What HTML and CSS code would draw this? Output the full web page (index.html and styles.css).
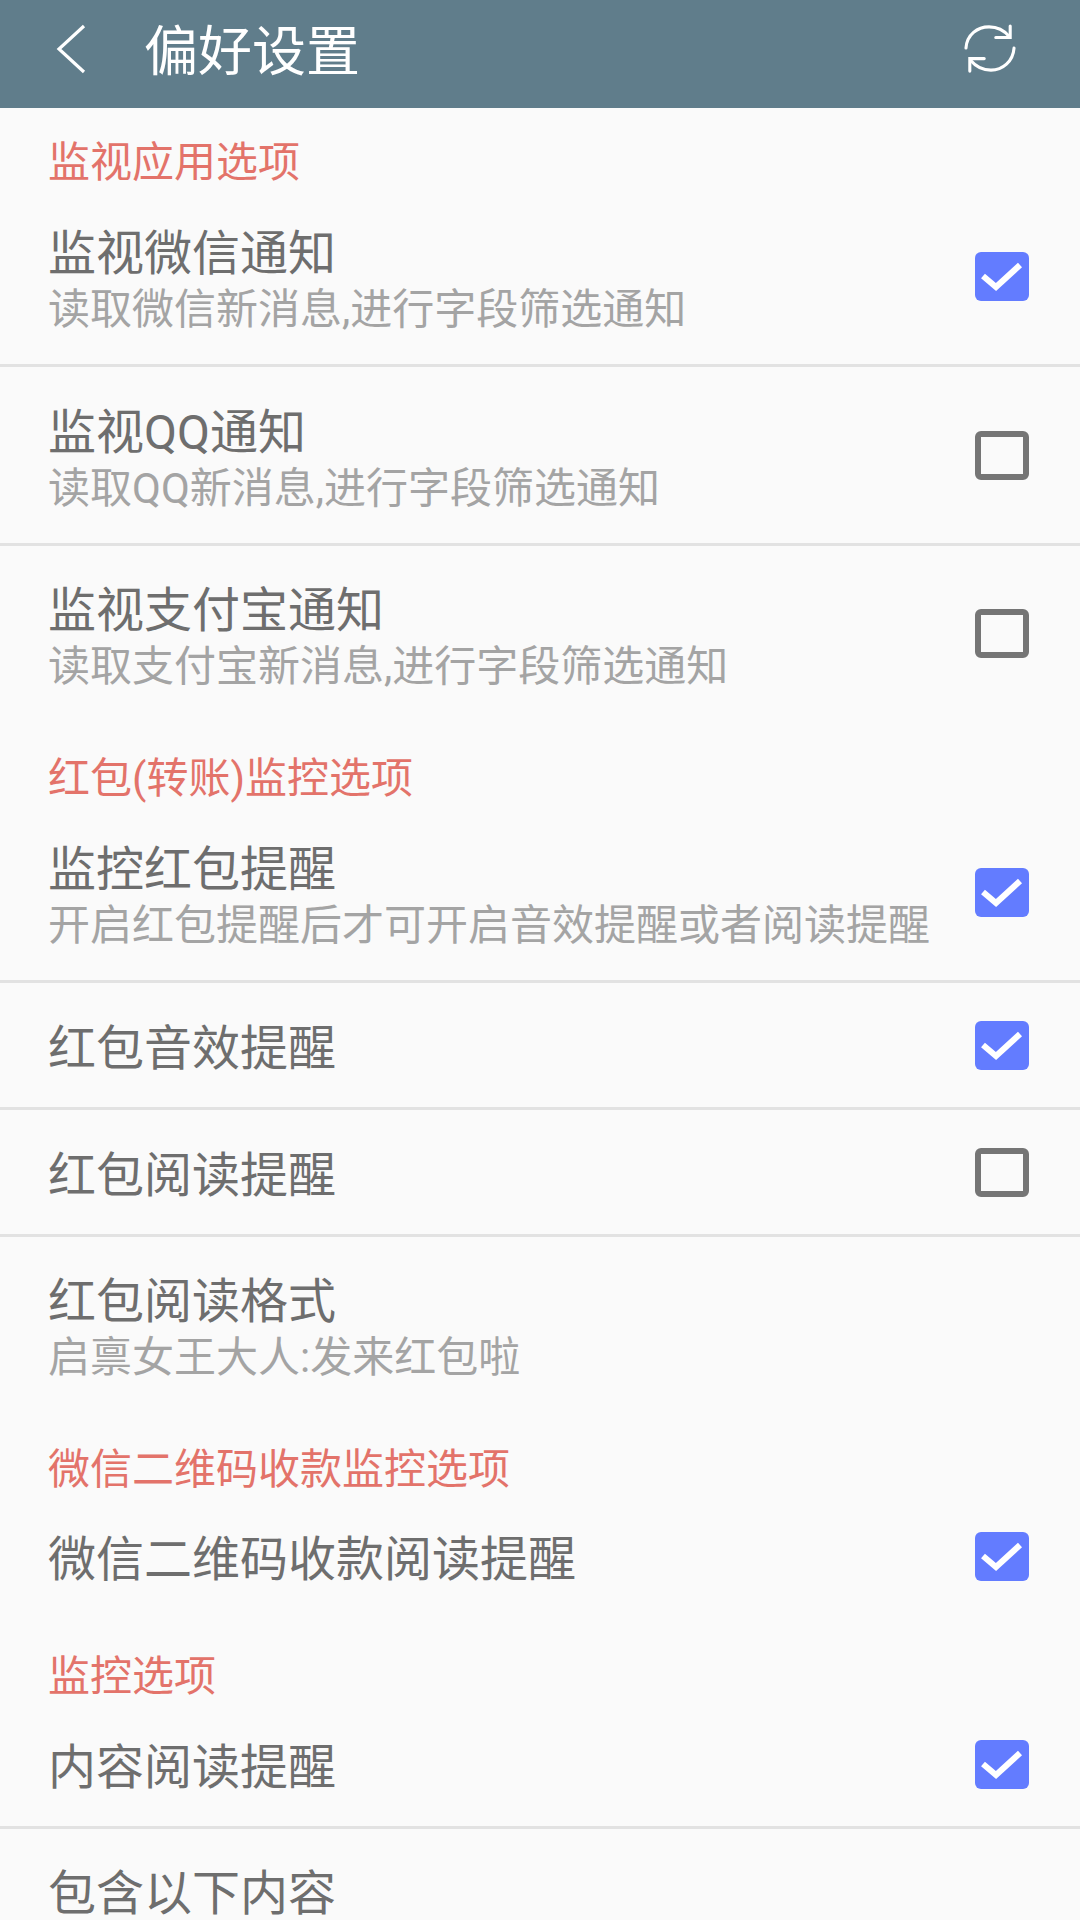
FILE: index.html
```html
<!DOCTYPE html>
<html lang="zh-CN">
<head>
  <meta charset="UTF-8" />
  <meta name="viewport" content="width=device-width, initial-scale=1.0"/>
  <title>偏好设置</title>
  <link rel="stylesheet" href="styles.css">
</head>
<body>

  <header class="toolbar">
    <svg class="back-icon" viewBox="0 0 30 50" width="30" height="50">
      <path d="M28 2 L3 25 L28 48" fill="none" stroke="#fff" stroke-width="3.2"/>
    </svg>
    <h1>偏好设置</h1>
    <svg class="sync-icon" viewBox="0 0 56 52" width="54" height="50">
      <path d="M3 25 C4 11 15 3 27 3 C36 3 43 7 48 13" fill="none" stroke="#fff" stroke-width="3.2" stroke-linecap="round"/>
      <path d="M49 2 V14 H34" fill="none" stroke="#fff" stroke-width="3.2" stroke-linecap="round"/>
      <path d="M53 25 C52 39 41 48 29 48 C20 48 13 44 8 38" fill="none" stroke="#fff" stroke-width="3.2" stroke-linecap="round"/>
      <path d="M7 49 V36 H22" fill="none" stroke="#fff" stroke-width="3.2" stroke-linecap="round"/>
    </svg>
  </header>

  <main>
    <h2 class="section-title">监视应用选项</h2>

    <div class="item line">
      <div class="item-text">
        <h3>监视微信通知</h3>
        <p>读取微信新消息,进行字段筛选通知</p>
      </div>
      <span class="check on"><svg viewBox="0 0 54 49"><path d="M8 24 L21 35 L45 13" fill="none" stroke="#fff" stroke-width="6"/></svg></span>
    </div>

    <div class="item line">
      <div class="item-text">
        <h3>监视QQ通知</h3>
        <p>读取QQ新消息,进行字段筛选通知</p>
      </div>
      <span class="check"></span>
    </div>

    <div class="item">
      <div class="item-text">
        <h3>监视支付宝通知</h3>
        <p>读取支付宝新消息,进行字段筛选通知</p>
      </div>
      <span class="check"></span>
    </div>

    <h2 class="section-title">红包(转账)监控选项</h2>

    <div class="item line">
      <div class="item-text">
        <h3>监控红包提醒</h3>
        <p>开启红包提醒后才可开启音效提醒或者阅读提醒</p>
      </div>
      <span class="check on"><svg viewBox="0 0 54 49"><path d="M8 24 L21 35 L45 13" fill="none" stroke="#fff" stroke-width="6"/></svg></span>
    </div>

    <div class="item single line">
      <div class="item-text">
        <h3>红包音效提醒</h3>
      </div>
      <span class="check on"><svg viewBox="0 0 54 49"><path d="M8 24 L21 35 L45 13" fill="none" stroke="#fff" stroke-width="6"/></svg></span>
    </div>

    <div class="item single line">
      <div class="item-text">
        <h3>红包阅读提醒</h3>
      </div>
      <span class="check"></span>
    </div>

    <div class="item">
      <div class="item-text">
        <h3>红包阅读格式</h3>
        <p>启禀女王大人:发来红包啦</p>
      </div>
    </div>

    <h2 class="section-title">微信二维码收款监控选项</h2>

    <div class="item single">
      <div class="item-text">
        <h3>微信二维码收款阅读提醒</h3>
      </div>
      <span class="check on"><svg viewBox="0 0 54 49"><path d="M8 24 L21 35 L45 13" fill="none" stroke="#fff" stroke-width="6"/></svg></span>
    </div>

    <h2 class="section-title">监控选项</h2>

    <div class="item single line">
      <div class="item-text">
        <h3>内容阅读提醒</h3>
      </div>
      <span class="check on"><svg viewBox="0 0 54 49"><path d="M8 24 L21 35 L45 13" fill="none" stroke="#fff" stroke-width="6"/></svg></span>
    </div>

    <div class="item single">
      <div class="item-text">
        <h3>包含以下内容</h3>
      </div>
    </div>
  </main>

</body>
</html>
```

FILE: styles.css
```css
html, body {
  height: 1920px;
  overflow: hidden;
}

body {
  margin: 0;
  font-family: Roboto, "Noto Sans CJK SC", sans-serif;
  background: #fafafa;
}

.toolbar {
  display: flex;
  align-items: center;
  height: 108px;
  background: #607d8b;
  padding: 0 63px 11px 56px;
  box-sizing: border-box;
}

.toolbar h1 {
  flex: 1;
  margin: 8px 0 0 58px;
  font-size: 54px;
  line-height: 88px;
  font-weight: 400;
  color: #fff;
}

.section-title {
  margin: 0;
  height: 80px;
  padding: 30px 0 0 48px;
  box-sizing: border-box;
  font-size: 42px;
  line-height: 50px;
  font-weight: 400;
  color: #e3736a;
}

.item {
  display: flex;
  align-items: center;
  box-sizing: border-box;
  height: 178px;
  padding: 0 51px 4px 48px;
}

.item.single {
  height: 127px;
}

.item.line {
  height: 179px;
  padding-bottom: 0;
  border-bottom: 3px solid #e2e2e2;
}

.item.single.line {
  height: 127px;
}

.item-text {
  flex: 1;
  padding-top: 12px;
}

.item.single .item-text {
  padding-top: 7px;
}

.item h3 {
  margin: 0;
  font-size: 48px;
  line-height: 56px;
  font-weight: 400;
  color: #6e6e6e;
}

.item p {
  margin: 0;
  font-size: 42px;
  line-height: 56px;
  color: #a4a4a4;
}

.check {
  width: 54px;
  height: 49px;
  box-sizing: border-box;
  border: 6px solid #757575;
  border-radius: 6px;
}

.check.on {
  background: #637cff;
  border: none;
}

.check svg {
  display: block;
  width: 54px;
  height: 49px;
}
```
